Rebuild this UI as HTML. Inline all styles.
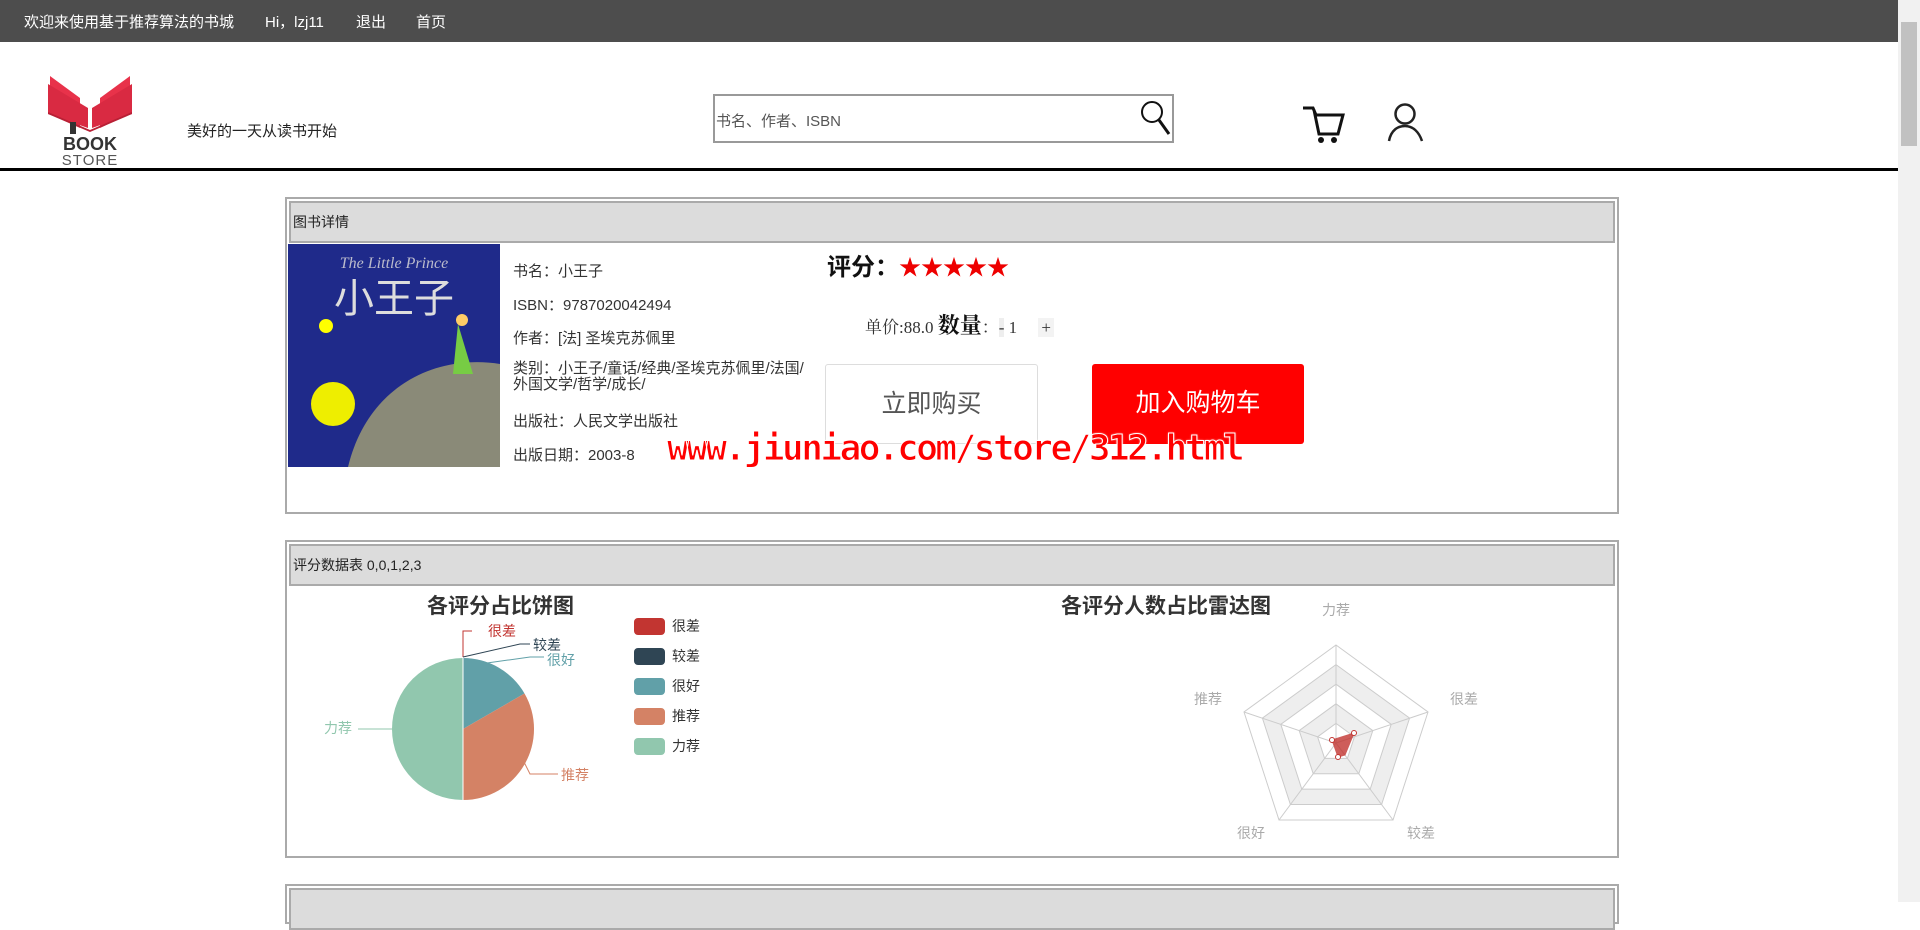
<!DOCTYPE html>
<html><head><meta charset="utf-8">
<style>
*{margin:0;padding:0;box-sizing:border-box}
body{width:1920px;height:902px;overflow:hidden;background:#fff;font-family:"Liberation Sans","Noto Sans CJK SC",sans-serif;color:#222;position:relative}
.abs{position:absolute}
.top{left:0;top:0;width:1898px;height:42px;background:#4d4d4d;color:#fff;font-size:15px}
.top span{position:absolute;top:11px}
.panel{position:absolute;left:285px;width:1334px;border:2px solid #aaa;background:#fff}
.ph{position:absolute;left:2px;right:2px;top:2px;height:42px;background:#dcdcdc;border:2px solid #aaa;font-size:14px;line-height:38px;padding-left:2px}
.info{position:absolute;left:513px;font-size:15px;color:#333}
</style></head><body>
<div class="abs top"><span style="left:24px">欢迎来使用基于推荐算法的书城</span><span style="left:265px">Hi，lzj11</span><span style="left:356px">退出</span><span style="left:416px">首页</span></div>
<div class="abs" style="left:1898px;top:0;width:22px;height:902px;background:#f1f1f1"></div>
<div class="abs" style="left:1901px;top:22px;width:16px;height:124px;background:#c1c1c1"></div>
<svg class="abs" style="left:40px;top:72px" width="110" height="96" viewBox="0 0 110 96">
<polygon points="10,4 40,26 40,56 10,42" fill="#e8324a"/>
<polygon points="90,4 60,26 60,56 90,42" fill="#e8324a"/>
<polygon points="8,12 48,36 48,56 8,42" fill="#d92a42"/>
<polygon points="92,12 52,36 52,56 92,42" fill="#d92a42"/>
<polygon points="8,40 50,58 92,40 92,42 50,60 8,42" fill="#b82035"/>
<rect x="30" y="50" width="6" height="12" fill="#333"/>
<text x="50" y="78" text-anchor="middle" font-family="Liberation Sans" font-weight="bold" font-size="18" fill="#333">BOOK</text>
<text x="50" y="93" text-anchor="middle" font-family="Liberation Sans" font-size="15" fill="#555" letter-spacing="1">STORE</text>
</svg>
<div class="abs" style="left:187px;top:120px;font-size:15px">美好的一天从读书开始</div>
<div class="abs" style="left:713px;top:94px;width:461px;height:49px;border:2px solid #999;"></div>
<div class="abs" style="left:716px;top:110px;font-size:15px;color:#555">书名、作者、ISBN</div>
<svg class="abs" style="left:1138px;top:98px" width="34" height="40"><circle cx="14" cy="14" r="10" fill="none" stroke="#111" stroke-width="2"/><line x1="21" y1="22" x2="31" y2="36" stroke="#111" stroke-width="3"/></svg>
<svg class="abs" style="left:1300px;top:104px" width="48" height="40"><path d="M3 4H13L16 11H43L38 30H19L14 6" fill="none" stroke="#111" stroke-width="3"/><circle cx="21" cy="36" r="3" fill="#111"/><circle cx="34" cy="36" r="3" fill="#111"/></svg>
<svg class="abs" style="left:1385px;top:102px" width="42" height="42"><circle cx="20" cy="12" r="9.5" fill="none" stroke="#222" stroke-width="2.5"/><path d="M4 39C6 28 13 24 20 24C28 24 34 30 37 39" fill="none" stroke="#222" stroke-width="2.5"/></svg>
<div class="abs" style="left:0;top:168px;width:1898px;height:3px;background:#000"></div>

<div class="panel" style="top:197px;height:317px">
<div class="ph">图书详情</div>
</div>
<svg class="abs" style="left:288px;top:244px" width="212" height="223" viewBox="0 0 212 223">
<rect width="212" height="223" fill="#1f2a8a"/>
<path d="M60 223C80 140 150 110 212 120V223Z" fill="#8a8a78"/>
<text x="106" y="24" text-anchor="middle" font-family="Liberation Serif" font-style="italic" font-size="16" fill="#bbc">The Little Prince</text>
<text x="106" y="68" text-anchor="middle" font-family="Noto Sans CJK SC" font-size="40" fill="#ddd">小王子</text>
<circle cx="38" cy="82" r="7" fill="#ff0"/><circle cx="45" cy="160" r="22" fill="#ee0"/>
<path d="M170 80L165 130L185 130Z" fill="#7c4"/><circle cx="174" cy="76" r="6" fill="#fc6"/>
</svg>
<div class="info" style="top:260px">书名：小王子</div>
<div class="info" style="top:294px">ISBN：9787020042494</div>
<div class="info" style="top:327px">作者：[法] 圣埃克苏佩里</div>
<div class="info" style="top:361px;width:305px;line-height:16px">类别：小王子/童话/经典/圣埃克苏佩里/法国/外国文学/哲学/成长/</div>
<div class="info" style="top:410px">出版社：人民文学出版社</div>
<div class="info" style="top:444px">出版日期：2003-8</div>
<div class="abs" style="left:827px;top:247px;font-size:24px;font-weight:bold;color:#111">评分：<span style="color:#e00;font-weight:normal;font-size:22px">★★★★★</span></div>
<div class="abs" style="left:865px;top:309px;font-size:17px;font-family:'Liberation Serif','Noto Serif CJK SC',serif;color:#333">单价:88.0 <b style="font-size:22px;color:#111">数量</b>：<span style="background:#eee">-</span> 1 &nbsp; &nbsp; <span style="background:#f3f3f3;padding:0 3px">+</span></div>
<div class="abs" style="left:825px;top:364px;width:213px;height:80px;border:1px solid #ddd;border-radius:3px;font-size:25px;color:#555;text-align:center;line-height:78px">立即购买</div>
<div class="abs" style="left:1092px;top:364px;width:212px;height:80px;background:#f00;border-radius:3px;font-size:25px;color:#fff;text-align:center;line-height:78px">加入购物车</div>
<div class="abs" style="left:667px;top:428px;font-size:36px;font-weight:bold;color:#f00;font-family:'DejaVu Sans Mono',monospace;letter-spacing:-2.5px;-webkit-text-stroke:1px #fff;text-shadow:0 0 2px #fff">www.jiuniao.com/store/312.html</div>

<div class="panel" style="top:540px;height:318px">
<div class="ph">评分数据表 0,0,1,2,3</div>
</div>
<div class="abs" style="left:427px;top:590px;font-size:21px;font-weight:bold;color:#333">各评分占比饼图</div>
<svg class="abs" style="left:300px;top:610px" width="480" height="200" viewBox="300 610 480 200">
<path d="M463 729L463 658A71 71 0 0 1 524.5 693.5Z" fill="#61a0a8"/>
<path d="M463 729L524.5 693.5A71 71 0 0 1 463 800Z" fill="#d48265"/>
<path d="M463 729L463 800A71 71 0 0 1 463 658Z" fill="#91c7ae"/>
<line x1="463" y1="658" x2="463" y2="800" stroke="#fff" stroke-width="1"/>
<path d="M463 657V631H472" fill="none" stroke="#c23531"/><text x="488" y="636" font-size="14" fill="#c23531" font-family="Noto Sans CJK SC">很差</text>
<path d="M463 657L520 644H530" fill="none" stroke="#2f4554"/><text x="533" y="650" font-size="14" fill="#2f4554" font-family="Noto Sans CJK SC">较差</text>
<path d="M487 663L530 657H544" fill="none" stroke="#61a0a8"/><text x="547" y="665" font-size="14" fill="#61a0a8" font-family="Noto Sans CJK SC">很好</text>
<path d="M523 760L530 774H558" fill="none" stroke="#d48265"/><text x="561" y="780" font-size="14" fill="#d48265" font-family="Noto Sans CJK SC">推荐</text>
<path d="M392 729H358" fill="none" stroke="#91c7ae"/><text x="324" y="733" font-size="14" fill="#91c7ae" font-family="Noto Sans CJK SC">力荐</text>
<g font-size="14" fill="#333" font-family="Noto Sans CJK SC">
<rect x="634" y="618" width="31" height="17" rx="4" fill="#c23531"/><text x="672" y="631">很差</text>
<rect x="634" y="648" width="31" height="17" rx="4" fill="#2f4554"/><text x="672" y="661">较差</text>
<rect x="634" y="678" width="31" height="17" rx="4" fill="#61a0a8"/><text x="672" y="691">很好</text>
<rect x="634" y="708" width="31" height="17" rx="4" fill="#d48265"/><text x="672" y="721">推荐</text>
<rect x="634" y="738" width="31" height="17" rx="4" fill="#91c7ae"/><text x="672" y="751">力荐</text>
</g>
</svg>
<div class="abs" style="left:1061px;top:590px;font-size:21px;font-weight:bold;color:#333">各评分人数占比雷达图</div>
<svg class="abs" style="left:1180px;top:595px" width="310" height="250" viewBox="1180 595 310 250">
<g stroke="#ccc" fill="none">
<polygon points="1336,645 1428,712 1393,820 1279,820 1244,712" fill="#fff"/>
<polygon points="1336,664.6 1409.6,718.1 1381.6,804.5 1290.4,804.5 1262.4,718.1" fill="#eee"/>
<polygon points="1336,684.2 1391.2,724.3 1370.2,789.1 1301.8,789.1 1280.8,724.3" fill="#fff"/>
<polygon points="1336,703.8 1372.8,730.6 1358.8,773.7 1313.2,773.7 1299.2,730.6" fill="#eee"/>
<polygon points="1336,723.4 1354.4,736.8 1347.4,758.4 1324.6,758.4 1317.6,736.8" fill="#fff"/>
<line x1="1336" y1="743" x2="1336" y2="645"/><line x1="1336" y1="743" x2="1428" y2="712"/><line x1="1336" y1="743" x2="1393" y2="820"/><line x1="1336" y1="743" x2="1279" y2="820"/><line x1="1336" y1="743" x2="1244" y2="712"/>
</g>
<polygon points="1354,733 1345,755 1338,757 1332,740" fill="#c23531" opacity="0.8" stroke="#c23531"/>
<g fill="#fff" stroke="#c23531"><circle cx="1354" cy="733" r="2.5"/><circle cx="1332" cy="740" r="2.5"/><circle cx="1338" cy="757" r="2.5"/></g>
<g font-size="14" fill="#aaa" font-family="Noto Sans CJK SC" text-anchor="middle">
<text x="1336" y="615">力荐</text><text x="1464" y="704">很差</text><text x="1421" y="838">较差</text><text x="1251" y="838">很好</text><text x="1208" y="704">推荐</text></g>
</svg>

<div class="panel" style="top:884px;height:40px"><div class="ph"></div></div>
</body></html>
